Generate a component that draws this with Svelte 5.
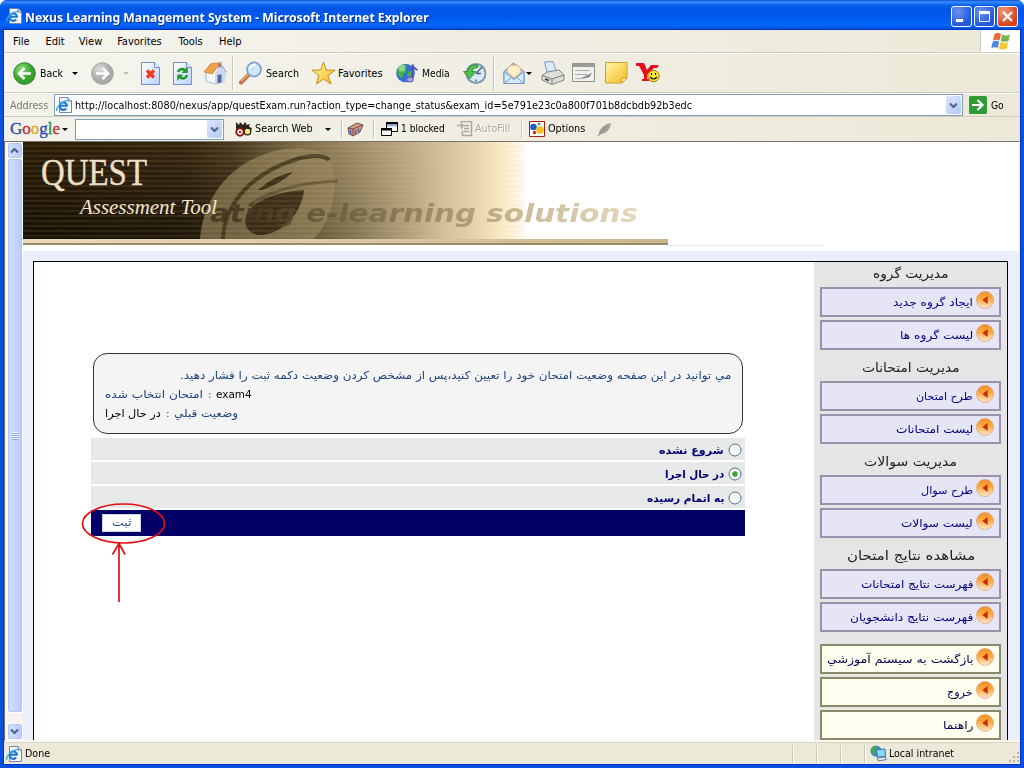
<script>
  const menus = [['File', 17], ['Edit', 18], ['View', 23], ['Favorites', 46], ['Tools', 25], ['Help', 22]];
  const groups = [
    { title: 'مديريت گروه', w: 76, items: [['ايجاد گروه جديد', 80], ['ليست گروه ها', 73]] },
    { title: 'مديريت امتحانات', w: 98, items: [['طرح امتحان', 57], ['ليست امتحانات', 77]] },
    { title: 'مديريت سوالات', w: 93, items: [['طرح سوال', 52], ['ليست سوالات', 72]] },
    { title: 'مشاهده نتايج امتحان', w: 128, items: [['فهرست نتايج امتحانات', 112], ['فهرست نتايج دانشجويان', 123]] }
  ];
  const links = [['بازگشت به سيستم آموزشي', 146], ['خروج', 26], ['راهنما', 30]];
  const options = [['شروع نشده', 65, false], ['در حال اجرا', 59, true], ['به اتمام رسيده', 77, false]];

  function fit(node, width) {
    const natural = node.offsetWidth;
    if (natural) node.style.transform = `scaleX(${width / natural})`;
  }
</script>

{#snippet t(text, w, rtl = false)}
  <span class="fit" style="width:{w}px"><span class="ink" dir={rtl ? 'rtl' : 'ltr'} use:fit={w}>{text}</span></span>
{/snippet}

{#snippet caret(color = '#000')}
  <svg class="caret" width="6" height="3" viewBox="0 0 6 3"><path d="M0 0h6L3 3z" fill={color} /></svg>
{/snippet}

{#snippet ie()}
  <svg width="16" height="16" viewBox="0 0 16 16">
    <path d="M3.500.5h8.500l3.500 3.500v11.500h-12z" fill="#f4f8ff" stroke="#6f86b5" />
    <path d="M12 .5v3.500h3.500" fill="#dce6f8" stroke="#5a74a8" />
    <path d="M11 8.800H3.800M11 9.500V8.500a3.700 3.700 0 1 0-.8 3" fill="none" stroke="#1b76cf" stroke-width="2.100" />
    <path d="M1 14C-.8 11 5.500 3.600 12 3.600" fill="none" stroke="#3da2e6" stroke-width="1.300" />
  </svg>
{/snippet}

{#snippet chevron()}
  <span class="chev"><svg width="9" height="7" viewBox="0 0 9 7"><path d="M1 1.500l3.500 3.500L8 1.500" fill="none" stroke="#4d6185" stroke-width="2" /></svg></span>
{/snippet}

{#snippet bullet()}
  <svg class="bullet" width="18" height="18" viewBox="0 0 18 18">
    <circle cx="9" cy="9" r="8.500" fill="url(#orange)" stroke="#d9a070" stroke-width=".7" />
    <path d="M11.600 5v8L6.300 9z" fill="#c92a08" />
  </svg>
{/snippet}

<div class="window">
  <svg class="defs" width="0" height="0">
    <defs>
      <linearGradient id="orange" x2="0" y2="1"><stop offset="0" stop-color="#f08f2c" /><stop offset=".45" stop-color="#ffab40" /><stop offset="1" stop-color="#ffe9d4" /></linearGradient>
      <radialGradient id="green" cx=".35" cy=".3"><stop offset="0" stop-color="#8bdc77" /><stop offset="1" stop-color="#35a02c" /></radialGradient>
      <radialGradient id="grey" cx=".35" cy=".3"><stop offset="0" stop-color="#ddd" /><stop offset="1" stop-color="#a9a9a6" /></radialGradient>
      <linearGradient id="paper" x2="1" y2="1"><stop offset="0" stop-color="#fff" /><stop offset="1" stop-color="#b9d2fa" /></linearGradient>
      <linearGradient id="gold" x2="1" y2="1"><stop offset="0" stop-color="#fff7a8" /><stop offset="1" stop-color="#f4b91e" /></linearGradient>
    </defs>
  </svg>

  <header class="title">
    {@render ie()}
    <b>{@render t('Nexus Learning Management System - Microsoft Internet Explorer', 404)}</b>
    <div class="controls">
      <i class="ctl"><svg width="19" height="19"><path d="M4 13.500h7" stroke="#fff" stroke-width="3" /></svg></i>
      <i class="ctl"><svg width="19" height="19"><path d="M4.500 6v8.500h10V5" fill="none" stroke="#fff" /><path d="M4 5.500h11" stroke="#fff" stroke-width="3" /></svg></i>
      <i class="ctl close"><svg width="19" height="19"><path d="M5 5l9 9M14 5l-9 9" stroke="#fff" stroke-width="2.200" /></svg></i>
    </div>
  </header>

  <div class="body">
    <nav class="menu">
      <div class="menus">
        {#each menus as [name, w]}<span>{@render t(name, w)}</span>{/each}
      </div>
      <div class="flag">
        <svg width="20" height="19" viewBox="0 0 20 19">
          <path d="M3.500 2Q6.500 0 10 2L8.500 8.500Q5 6.800 2 8.500z" fill="#ed6a35" />
          <path d="M11 2.500Q15 4.300 19 2.500L17.500 9Q13.500 10.600 9.700 8.900z" fill="#74b84a" />
          <path d="M1.700 9.700Q5 8 8.200 9.700L6.700 16Q3.500 14.500 .3 16z" fill="#4a8ae0" />
          <path d="M9.300 10Q13.300 11.800 17.200 10L15.700 16.500Q11.500 18.300 7.800 16.500z" fill="#f8c92f" />
        </svg>
      </div>
    </nav>

    <div class="tools">
      <svg width="23" height="23" viewBox="0 0 23 23"><circle cx="11.500" cy="11.500" r="10.800" fill="url(#green)" stroke="#32852d" /><path d="M18 11.500H6.500M11.500 6l-5.500 5.500 5.500 5.500" fill="none" stroke="#fff" stroke-width="2.600" /></svg>
      {@render t('Back', 23)}
      {@render caret()}
      <svg width="23" height="23" viewBox="0 0 23 23"><circle cx="11.500" cy="11.500" r="10.800" fill="url(#grey)" stroke="#a5a5a0" /><path d="M5 11.500h11.500M11.500 6l5.500 5.500-5.500 5.500" fill="none" stroke="#fff" stroke-width="2.600" /></svg>
      {@render caret('#bdbbae')}
      <svg width="20" height="23" viewBox="0 0 20 23"><path d="M.5.5h13L18.500 5.500v17H.5z" fill="url(#paper)" stroke="#6f8fcb" /><path d="M13.500.5v5h5" fill="#e8f0ff" stroke="#6f8fcb" /><path d="M6 8.500l7 7M13 8.500l-7 7" stroke="#f03a1c" stroke-width="3.400" /></svg>
      <svg width="20" height="23" viewBox="0 0 20 23"><path d="M.5.5h13L18.500 5.500v17H.5z" fill="url(#paper)" stroke="#6f8fcb" /><path d="M13.500.5v5h5" fill="#e8f0ff" stroke="#6f8fcb" /><path d="M5 10Q6.500 5.500 12.500 8M14 13Q12.500 18 7 15.500" fill="none" stroke="#219a31" stroke-width="2.600" /><path d="M14.800 4.500V11H8.500zM4.200 19v-6.500h6z" fill="#219a31" /></svg>
      <svg width="24" height="24" viewBox="0 0 24 24"><path d="M15.500 1.500h3v7h-3z" fill="#b8402c" /><path d="M3 12l8-7.500 10 8v8L12 23l-9-3z" fill="#f7f9ff" stroke="#8ea2cc" stroke-width=".8" /><path d="M12 12l5-7 6 7.500-1.500 8L12 23z" fill="#cad9f4" /><path d="M1 11L8 2.500l9-.5-7.500 11z" fill="#f2a24a" stroke="#cf742c" stroke-width=".7" /><path d="M17 2l6.500 9.500" stroke="#a9b8d8" stroke-width="1.500" /><path d="M14.500 14l4-.7v8l-4 1z" fill="#55688f" /></svg>
      <i class="rule"></i>
      <svg width="24" height="24" viewBox="0 0 24 24"><path d="M2 21.500l8.500-8.500" stroke="#bd7044" stroke-width="4" stroke-linecap="round" /><path d="M2 20.500l8-8" stroke="#efb085" stroke-width="1.300" /><circle cx="15" cy="8.500" r="7" fill="#cde8fc" stroke="#84a5d3" stroke-width="1.800" /><path d="M10.500 7.500Q12 3.500 17 3.500" stroke="#fff" stroke-width="2" fill="none" /></svg>
      {@render t('Search', 33)}
      <svg width="25" height="24" viewBox="0 0 25 24"><path d="M12.500 1l2.800 8 8.700.2-7 5.400 3 8.400-7.500-5-7 5 2.300-8.400L1 9.200l8.500-.2z" fill="url(#gold)" stroke="#c88c1e" /></svg>
      {@render t('Favorites', 45)}
      <svg width="24" height="22" viewBox="0 0 24 22"><circle cx="9.500" cy="11" r="9.300" fill="#3a6cd8" /><path d="M1 8q4-7 10-5l-2 4 2 3-4 2-1 5Q1 14 1 8zM12 10l4-2 1 5-3 3-3-2z" fill="#43b34a" /><circle cx="6" cy="6" r="3.500" fill="#b7f1a9" opacity=".6" /><path d="M16.500 17V2.500q1 4 5 5.500" fill="none" stroke="#4d50b7" stroke-width="1.800" /><ellipse cx="14" cy="17.500" rx="3.300" ry="2.600" fill="#a7a2ee" stroke="#5654ad" /></svg>
      {@render t('Media', 28)}
      <svg width="24" height="23" viewBox="0 0 24 23"><circle cx="13" cy="11.500" r="9.500" fill="#dbeaf4" stroke="#7e9ab5" stroke-width="2" /><path d="M13 11.500L19 5M13 11.500h5M13 3.500v2M13 17.500v2" stroke="#4d6580" stroke-width="1.400" /><path d="M15 3Q6 1.500 4.500 9.500H.5l6 7.500L13 9.500H9Q9.500 6 15 5.500z" fill="#53bd4d" stroke="#25832a" stroke-width=".8" /></svg>
      <i class="rule"></i>
      <svg width="22" height="23" viewBox="0 0 22 23"><path d="M1 9.500L10.500 1 21 9.500v12H1z" fill="#a9cdf4" stroke="#6b8cbf" /><path d="M4 10q0-7 7-7t7 7l-7 6z" fill="#fff0cc" stroke="#dfb171" /><path d="M1 9.500l10 8 10-8v12H1z" fill="#d3e9ff" stroke="#7095ca" /><path d="M1 21.500l8-6.500M21 21.500l-8-6.500" stroke="#7095ca" /></svg>
      {@render caret()}
      <svg width="24" height="24" viewBox="0 0 24 24"><path d="M3.500 1L12 .5l3.500 10.500-9 2z" fill="#dceaff" stroke="#7999cb" /><path d="M1 14.500L6 11l12-2 5 5v5l-12 4.500L1 19z" fill="#deded9" stroke="#858585" /><path d="M1 14.500l10 3.500 12-4M11 18v5" fill="none" stroke="#777" /><path d="M4 18l4 1.500" stroke="#333" stroke-width="1.500" /></svg>
      <svg width="24" height="20" viewBox="0 0 24 20"><path d="M.5.5h22v18H.5z" fill="#efefec" stroke="#92928e" /><path d="M1 2.500h21" stroke="#9a9a96" stroke-width="3" /><path d="M3 7.500h15M3 11.500h12M3 15.500h6" stroke="#aaa" /><path d="M8 15.500q9-4 12-6l-2 4q-3 2-10 2z" fill="#888" /></svg>
      <svg width="23" height="22" viewBox="0 0 23 22"><path d="M.5.5h21.500v15.500l-5 5H.5z" fill="url(#gold)" stroke="#cfa02c" /><path d="M17 21v-5h5z" fill="#fff2af" stroke="#cfa02c" /></svg>
      <svg width="25" height="22" viewBox="0 0 25 22"><path d="M0 1h8l3 7 4-5h8l-2 3h-3l-7 7v4h2v2H6v-2h2v-4L3 4H0z" fill="#e5101c" /><circle cx="17.500" cy="14" r="5.700" fill="#ffe534" stroke="#a17a00" /><path d="M15.500 11v2M19.500 11v2M14 15q3.500 4 7 0" fill="none" stroke="#111" stroke-width="1.200" /></svg>
    </div>

    <div class="address">
      {@render t('Address', 38)}
      <div class="combo">
        {@render ie()}
        {@render t('http://localhost:8080/nexus/app/questExam.run?action_type=change_status&exam_id=5e791e23c0a800f701b8dcbdb92b3edc', 617)}
        {@render chevron()}
      </div>
      <svg width="18" height="18" viewBox="0 0 18 18"><rect width="18" height="18" rx="1.500" fill="#2f9b36" /><path d="M3 9h10M8.500 4l5 5-5 5" fill="none" stroke="#fff" stroke-width="2.200" /></svg>
      {@render t('Go', 13)}
    </div>

    <div class="google">
      <span class="logo"><i class="b">G</i><i class="r">o</i><i class="y">o</i><i class="b">g</i><i class="g">l</i><i class="r">e</i></span>
      {@render caret()}
      <div class="field">{@render chevron()}</div>
      <svg width="17" height="16" viewBox="0 0 17 16"><path d="M1 1l3 3 1-3 3 3 2-3 2 3 3-1-1 3 3 1-2 5-5-4-3 3-3-3-3 3z" fill="#2c2419" /><circle cx="5" cy="11" r="3.700" fill="#fff" stroke="#8e1212" stroke-width="2" /><circle cx="12.500" cy="10.500" r="3.300" fill="#ffe88b" stroke="#312510" stroke-width="1.300" /><circle cx="5" cy="11" r="1.300" fill="#c22" /></svg>
      {@render t('Search Web', 58)}
      {@render caret()}
      <i class="rule"></i>
      <svg width="17" height="15" viewBox="0 0 17 15"><path d="M1 6l9-5 6 2-3 7-7 4-4-2z" fill="#d79c88" stroke="#5e3430" stroke-width=".8" /><path d="M1 6l5 1 10-4M6 7v7" fill="none" stroke="#5e3430" stroke-width=".8" /><path d="M3 8l1 4M8.500 8v4M11.500 6.500v4" stroke="#4563b7" stroke-width="1.500" /></svg>
      <i class="rule"></i>
      <svg width="17" height="15" viewBox="0 0 17 15"><path d="M5.500.5h11v9h-11z" fill="#fff" stroke="#000" /><path d="M5 1.500h12" stroke="#000" stroke-width="2" /><path d="M6 3.500h10" stroke="#9db9e8" stroke-width="2" /><path d="M.5 6.500h10v7H.5z" fill="#fff" stroke="#000" /><path d="M0 7.500h11" stroke="#000" stroke-width="2" /></svg>
      {@render t('1 blocked', 44)}
      <svg width="16" height="16" viewBox="0 0 16 16"><path d="M3.500.5h11v14h-9v-5M0 4.500h6l-2-3m2 3l-2 3M7 4.500h5M7 7.500h5M7 10.500h5" fill="none" stroke="#aaa99d" stroke-width="1.500" /></svg>
      <span class="off">{@render t('AutoFill', 35)}</span>
      <i class="rule"></i>
      <svg width="16" height="16" viewBox="0 0 16 16"><path d="M.5.5h15v15H.5z" fill="#fff" stroke="#a51e1e" /><circle cx="4.500" cy="6" r="3.300" fill="#255bbf" /><circle cx="11" cy="9" r="3.800" fill="#f4bd20" /><circle cx="5.500" cy="11.500" r="1.700" fill="#c4271a" /><circle cx="10" cy="3" r="1.300" fill="#2b963a" /></svg>
      {@render t('Options', 37)}
      <svg width="15" height="15" viewBox="0 0 15 15"><path d="M1 14L3 8q4-6 11-7-1 7-6 10l-4 1z" fill="#a3a197" /><path d="M1 14L9 5" stroke="#8b897f" /></svg>
    </div>

    <div class="view">
      <div class="scroll">
        <span class="sbtn"><svg width="9" height="7" viewBox="0 0 9 7"><path d="M1 5.500L4.500 2 8 5.500" fill="none" stroke="#4d6185" stroke-width="2" /></svg></span>
        <span class="thumb"><i></i></span>
        <span class="sbtn"><svg width="9" height="7" viewBox="0 0 9 7"><path d="M1 1.500L4.500 5 8 1.500" fill="none" stroke="#4d6185" stroke-width="2" /></svg></span>
      </div>

      <div class="page">
        <svg class="banner" width="996" height="109" viewBox="23 142 996 109">
          <defs>
            <linearGradient id="brown" gradientUnits="userSpaceOnUse" x1="23" x2="530" y1="0" y2="0">
              <stop offset="0" stop-color="#2b1d07" /><stop offset=".32" stop-color="#352610" /><stop offset=".42" stop-color="#4b3b20" /><stop offset=".58" stop-color="#8a7850" /><stop offset=".75" stop-color="#bca981" /><stop offset=".88" stop-color="#e2d0a8" /><stop offset=".95" stop-color="#fbecc9" /><stop offset="1" stop-color="#fff" />
            </linearGradient>
            <linearGradient id="shade" x2="0" y2="1"><stop offset="0" stop-color="#000" stop-opacity="0" /><stop offset="1" stop-color="#000" stop-opacity=".42" /></linearGradient>
            <linearGradient id="fade"><stop offset="0" stop-color="#fff" /><stop offset=".5" stop-color="#fff" /><stop offset="1" stop-color="#000" /></linearGradient>
            <mask id="darkSide"><rect x="23" y="142" width="420" height="97" fill="url(#fade)" /></mask>
            <pattern id="lines" width="8" height="5" patternUnits="userSpaceOnUse"><path d="M0 1h8" stroke="#d8c69a" stroke-width="1" opacity=".19" /></pattern>
            <linearGradient id="bar"><stop offset="0" stop-color="#e9dab9" /><stop offset="1" stop-color="#c9b78c" /></linearGradient>
            <linearGradient id="word" gradientUnits="userSpaceOnUse" x1="230" x2="638" y1="0" y2="0"><stop offset="0" stop-color="#40321b" /><stop offset=".4" stop-color="#80704c" /><stop offset=".7" stop-color="#bba981" /><stop offset="1" stop-color="#dfcfab" /></linearGradient>
          </defs>
          <rect x="23" y="142" width="996" height="109" fill="#fff" />
          <rect x="23" y="142" width="507" height="97" fill="url(#brown)" />
          <rect x="23" y="142" width="420" height="97" fill="url(#shade)" mask="url(#darkSide)" />
          <path d="M200 239C203 194 238 151 296 148C322 147 337 160 335 187C333 211 325 227 314 239Z" fill="#9b895f" opacity=".62" />
          <path d="M223 239C224 204 252 172 300 158Q322 153 329 160" fill="none" stroke="#33260f" stroke-width="4" opacity=".7" />
          <path d="M258 190Q275 175 293 172Q280 184 262 190z" fill="#2d200c" opacity=".8" />
          <path d="M246 226C241 206 269 192 304 190C302 212 283 235 259 235Q249 234 246 226z" fill="#271a08" opacity=".75" />
          <path d="M252 203Q285 183 338 181" fill="none" stroke="#40311a" stroke-width="3" opacity=".45" />
          <rect x="23" y="142" width="500" height="97" fill="url(#lines)" />
          <text x="210" y="222" class="slogan" textLength="428" lengthAdjust="spacingAndGlyphs" fill="url(#word)">ating e-learning solutions</text>
          <text x="41" y="185" class="quest" textLength="106" lengthAdjust="spacingAndGlyphs">QUEST</text>
          <text x="80" y="214" class="script" textLength="137" lengthAdjust="spacingAndGlyphs">Assessment Tool</text>
          <rect x="23" y="239" width="645" height="4" fill="url(#bar)" />
          <rect x="23" y="243" width="645" height="2" fill="#9b8b6b" />
          <rect x="668" y="245" width="154" height="1" fill="#e6e6de" />
        </svg>

        <div class="frame">
          <main>
            <section class="info">
              <p class="lead">{@render t('مي توانيد در اين صفحه وضعيت امتحان خود را تعيين كنيد،پس از مشخص كردن وضعيت دكمه ثبت را فشار دهيد.', 551, true)}</p>
              <p>{@render t('امتحان انتخاب شده', 98, true)}{@render t(':', 3)}<em>{@render t('exam4', 36)}</em></p>
              <p><em>{@render t('در حال اجرا', 56, true)}</em>{@render t(':', 3)}{@render t('وضعيت قبلي', 64, true)}</p>
            </section>
            {#each options as [name, w, on]}
              <div class="opt">
                {@render t(name, w, true)}
                <svg width="14" height="14" viewBox="0 0 14 14"><circle cx="7" cy="7" r="6" fill="#fafaf7" stroke="#527096" />{#if on}<circle cx="7" cy="7" r="2.700" fill="#31a52d" />{/if}</svg>
              </div>
            {/each}
            <div class="submit">
              <button>{@render t('ثبت', 19, true)}</button>
              <svg class="mark" width="88" height="104" viewBox="80 501 88 104" fill="none" stroke="#e30d14" stroke-width="1.700"><ellipse cx="123.500" cy="523.500" rx="41" ry="19.500" /><path d="M119 602V544M112.500 554.500L119 543.500l6 11" /></svg>
            </div>
          </main>

          <aside>
            {#each groups as g}
              <h2>{@render t(g.title, g.w, true)}</h2>
              {#each g.items as [name, w]}
                <div class="btn">{@render t(name, w, true)}{@render bullet()}</div>
              {/each}
            {/each}
            <div class="extra">
              {#each links as [name, w]}
                <div class="btn cream">{@render t(name, w, true)}{@render bullet()}</div>
              {/each}
            </div>
          </aside>
        </div>
      </div>
    </div>

    <footer>
      {@render ie()}
      {@render t('Done', 25)}
      <i class="rule"></i><i class="rule"></i><i class="rule"></i><i class="rule"></i>
      <svg width="17" height="17" viewBox="0 0 17 17"><circle cx="6" cy="6" r="5.500" fill="#3088d7" /><path d="M1 4q4-5 7-2L5 5l1 4-3 1z" fill="#48a94b" /><path d="M6.500 4.500l8.500-.5.500 7.500-8 .5z" fill="#87d7fb" stroke="#416cac" /><path d="M7 13l8-1 1.500 2.500-8 1.500z" fill="#dce9f9" stroke="#617caa" /></svg>
      {@render t('Local intranet', 65)}
      <svg class="grip" width="12" height="12" viewBox="0 0 12 12" fill="#b8b4a2"><path d="M9 0h2v2H9zM9 4h2v2H9zM5 4h2v2H5zM9 8h2v2H9zM5 8h2v2H5zM1 8h2v2H1z" /></svg>
    </footer>
  </div>
</div>

<style>
  :global(body) { margin: 0; overflow: hidden; }
  .window { width: 1024px; height: 768px; box-sizing: border-box; display: flex; flex-direction: column; background: #0a4fe0; font: 11px/14px "DejaVu Sans Condensed", "DejaVu Sans", sans-serif; color: #000; overflow: hidden; border-radius: 7px 7px 0 0; }
  .defs { position: absolute; }
  svg { display: block; flex: none; }
  i { font-style: normal; }
  .fit { display: inline-block; direction: ltr; flex: none; white-space: nowrap; text-align: left; vertical-align: top; }
  .ink { display: inline-block; transform-origin: 0 50%; }
  .title { height: 30px; flex: none; display: flex; align-items: center; padding: 2px 6px 0 6px; box-sizing: border-box; background: linear-gradient(#0a4fd6 0, #3a8dff 2px, #0862ee 5px, #0055e5 9px, #005bf2 20px, #0066ff 25px, #0047d0 30px); color: #fff; }
  .title b { margin: 2px 0 0 3px; font: bold 13px/18px "Noto Sans", sans-serif; text-shadow: 1px 1px #0a3390; }
  .controls { margin-left: auto; display: flex; gap: 2px; }
  .ctl { width: 19px; height: 19px; border: 1px solid #fff; border-radius: 3px; background: radial-gradient(circle at 30% 25%, #6e93f0, #2158dc 70%); }
  .ctl.close { background: radial-gradient(circle at 30% 25%, #f09a7d, #d8431b 70%); }
  .body { flex: 1; margin: 0 4px 4px; min-height: 0; background: #ece9d8; display: flex; flex-direction: column; box-shadow: 0 0 0 1px #0035c5; }
  .menu { height: 23px; flex: none; box-sizing: border-box; display: flex; justify-content: space-between; border-bottom: 1px solid #cfccbd; background: linear-gradient(90deg, #f5f4ee, #ece9d8); }
  .menus { display: flex; align-items: center; gap: 15.4px; padding: 1px 0 0 9px; }
  .menus span { display: block; height: 14px; }
  .flag { width: 39px; background: #fff; border-left: 1px solid #cfccbd; display: grid; place-items: center; }
  .tools { height: 40px; flex: none; box-sizing: border-box; border-top: 1px solid #fff; border-bottom: 1px solid #cfccbd; padding-left: 9px; display: grid; align-items: center; justify-items: start; grid-template-columns: 27px 32px 19px 32px 18px 32px 30px 29px 7px 27px 45px 27px 58px 26px 41px 30px 10px 23px 15px 31px 33px 31px 30px; background: linear-gradient(90deg, #f5f4ee, #ece9d8); }
  .rule { width: 1px; height: 34px; background: #cbc8b7; border-right: 1px solid #fff; }
  .tools > .fit, .address > .fit, .combo > .fit, footer > .fit { padding-top: 1px; }
  .address { height: 24px; flex: none; box-sizing: border-box; display: flex; align-items: center; border-top: 1px solid #fff; border-bottom: 1px solid #d0cdbd; padding-left: 6px; color: #000; background: linear-gradient(90deg, #f3f2ea, #ece9d8); }
  .address > :first-child { color: #7d7a70; margin-right: 6px; }
  .combo { width: 909px; height: 22px; box-sizing: border-box; border: 1px solid #7f9db9; background: #fff; display: flex; align-items: center; padding: 0 1px; margin-right: 6px; gap: 3px; }
  .address > :last-child { margin-left: 4px; }
  .chev { width: 15px; height: 18px; border-radius: 2px; background: linear-gradient(135deg, #dce7ff, #b2c8f7); display: grid; place-items: center; margin-left: auto; }
  .google { height: 24px; flex: none; display: grid; align-items: center; justify-items: start; padding-left: 6px; grid-template-columns: 52px 13px 160px 20px 70px 16px 6px 26px 8px 20px 56px 18px 46px 8px 19px 49px 16px; background: linear-gradient(90deg, #f3f2ea, #ece9d8); }
  .google .rule { height: 18px; }
  .logo { font: 17px/20px "Liberation Serif", serif; display: flex; -webkit-text-stroke: .3px; }
  .b { color: #2848b4; } .r { color: #c62b2b; } .y { color: #dba51c; } .g { color: #278b3b; }
  .field { width: 149px; height: 21px; box-sizing: border-box; background: #fff; border: 1px solid #7f9db9; display: flex; padding: 1px; align-items: center; }
  .off { color: #aaa89b; text-shadow: 1px 1px #fff; height: 14px; }
  .view { flex: 1; min-height: 0; box-sizing: border-box; border: 1px solid #77756b; border-right-color: #f5f4ee; border-bottom: 2px solid #faf9f3; display: flex; background: #fff; overflow: hidden; }
  .scroll { width: 18px; flex: none; background: #f5f4ef; display: flex; flex-direction: column; align-items: center; padding: 1px 1px 1px 2px; box-sizing: border-box; }
  .sbtn, .thumb { width: 14px; box-sizing: border-box; border-radius: 2px; border: 1px solid #b4c8f3; background: linear-gradient(90deg, #d0ddff, #b9cdfa); display: grid; place-items: center; box-shadow: 0 0 0 1px #fff; }
  .sbtn { height: 15px; flex: none; }
  .thumb { height: 553px; flex: none; margin: 1px 0 12px; }
  .thumb i { width: 6px; height: 8px; background: repeating-linear-gradient(#eef4ff 0 1px, #8caae8 1px 2px); }
  .page { width: 996px; flex: none; background: #ebeffb; overflow: hidden; }
  .slogan { font: italic bold 25px "DejaVu Sans", sans-serif; opacity: .8; }
  .quest { font: 37px "Liberation Serif", serif; fill: #eddfc3; stroke: #eddfc3; stroke-width: .4px; }
  .script { font: italic 22px "Liberation Serif", serif; fill: #f1e5ca; }
  .frame { margin: 10px 11px 0 10px; height: 500px; border: 1px solid #000; display: flex; background: #fff; }
  main { flex: 1; padding: 91px 69px 0 57px; }
  .info { margin: 0 2px 4px; height: 81px; box-sizing: border-box; border: 1px solid #333; border-radius: 14px; background: #f4f4f4; padding: 12px 11px 0; color: #1b4280; }
  p { margin: 0; height: 19px; line-height: 19px; display: flex; gap: 5px; }
  p.lead { justify-content: flex-end; }
  em { font-style: normal; color: #000; display: flex; }
  .opt { height: 22px; margin-bottom: 2px; background: #e7e9e8; display: flex; align-items: center; justify-content: flex-end; gap: 4px; padding-right: 3px; color: #000070; font-weight: bold; }
  .opt .fit { padding-top: 3px; }
  .opt svg { margin-top: 1px; }
  .submit { position: relative; height: 26px; background: #000066; padding: 4px 11px; box-sizing: border-box; }
  button { display: flex; align-items: center; justify-content: center; width: 39px; height: 18px; border: 1px solid #ccd7e6; background: #fff; padding: 0; color: #1b4280; font: inherit; }
  .mark { position: absolute; left: -11px; top: -9px; }
  aside { width: 193px; flex: none; box-sizing: border-box; background: #e5e5e5; padding: 0 6px; }
  h2 { height: 31px; margin: -3px 0 0; display: flex; align-items: center; justify-content: center; font: 13px/20px "DejaVu Sans", sans-serif; color: #222; padding-top: 5px; box-sizing: border-box; }
  h2:first-child { height: 25px; margin: 0; padding: 0 0 2px; }
  h2 + .btn { margin-top: 0; }
  h2:not(:first-child) { margin-top: 0; height: 28px; padding: 1px 0 0; }
  .btn { width: 181px; height: 30px; box-sizing: border-box; margin-bottom: 3px; border: 2px solid #9b91ad; background: #e6e5f5; color: #000080; display: flex; align-items: center; justify-content: flex-end; gap: 3px; padding-right: 5px; }
  .btn .fit { padding-top: 2px; }
  .bullet { margin-bottom: 4px; }
  .extra { padding-top: 9px; }
  .btn.cream { border-color: #8b8b6c; background: #fffff0; color: #00004d; }
  footer { height: 22px; flex: none; box-sizing: border-box; border-top: 1px solid #d8d5c5; display: grid; grid-template-columns: 19px 767px 24px 24px 24px 6px 19px 119px 12px; align-items: center; justify-items: start; padding-left: 2px; }
  footer .rule { height: 18px; }
  .grip { align-self: end; }
</style>
